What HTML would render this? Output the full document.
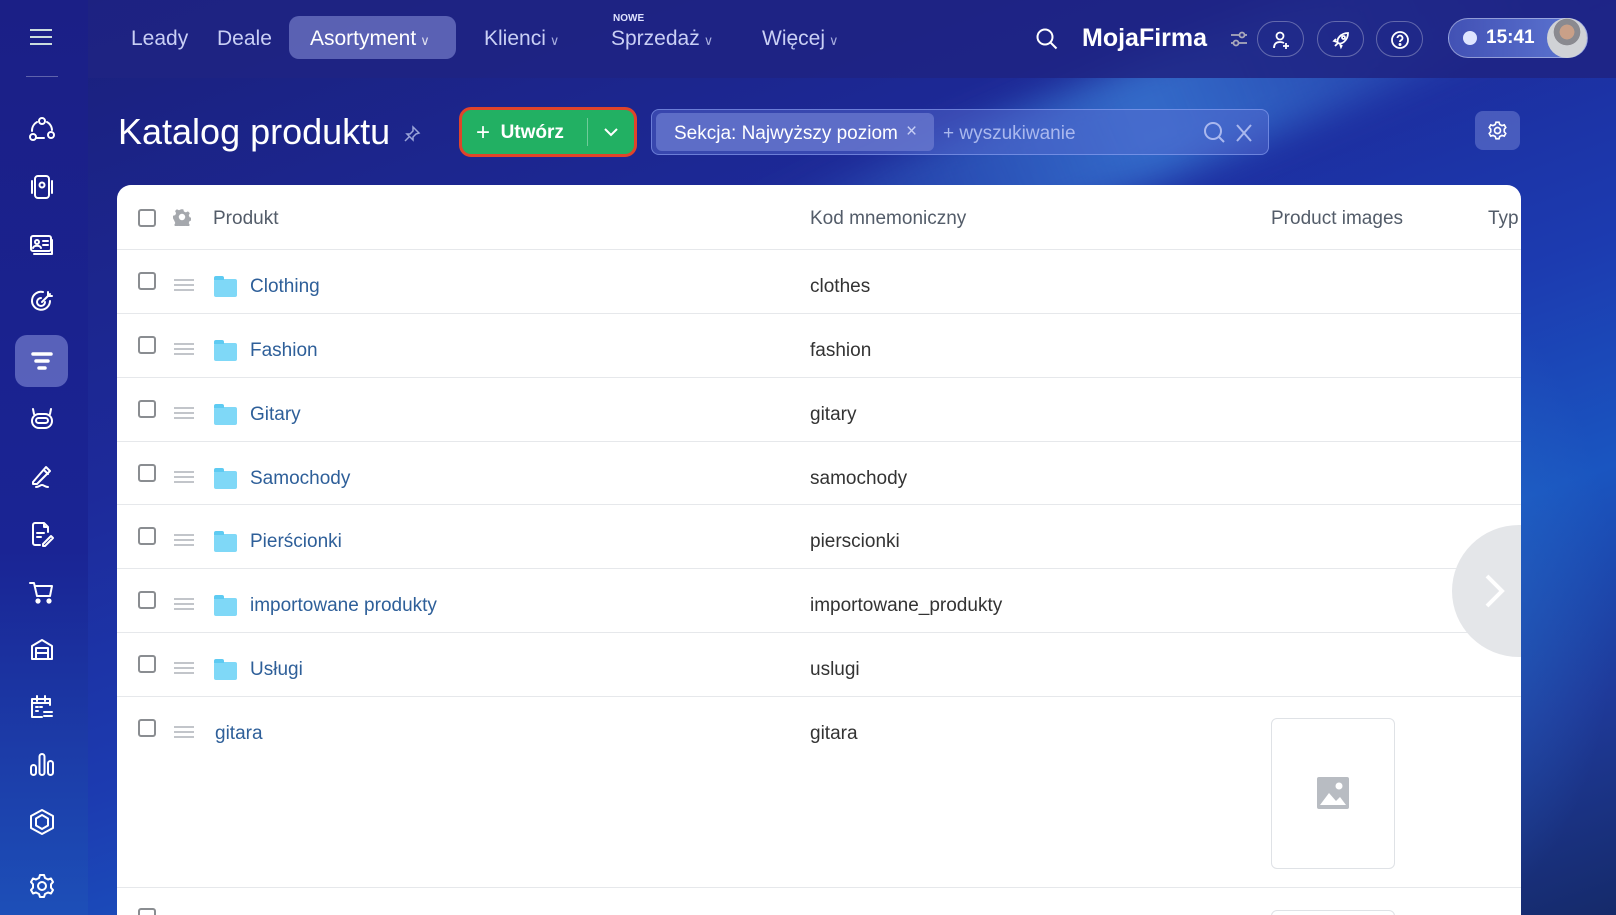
<!DOCTYPE html>
<html><head><meta charset="utf-8"><style>
*{margin:0;padding:0;box-sizing:border-box}
html{width:1616px;height:915px;overflow:hidden}
body{width:1616px;height:915px;overflow:hidden;font-family:"Liberation Sans",sans-serif;position:relative;
background:linear-gradient(160deg,#1a1f7a 0%,#1d2a9a 35%,#1c3bb0 55%,#1a55c0 70%,#1f3a9a 85%,#152a6a 100%);}
.streak{position:absolute;left:700px;top:60px;width:900px;height:120px;background:linear-gradient(90deg,rgba(60,140,230,0),rgba(70,160,240,.55),rgba(60,140,230,0));transform:rotate(-22deg);filter:blur(18px)}
.streak2{position:absolute;left:1300px;top:300px;width:316px;height:615px;background:radial-gradient(ellipse,rgba(40,110,200,.6),rgba(0,0,0,0) 70%)}
.side{position:absolute;left:0;top:0;width:88px;height:915px;background:linear-gradient(180deg,#1b1f86,#1a2494 60%,#1d4fb8)}
.top{position:absolute;left:88px;top:0;width:1528px;height:78px;background:rgba(30,35,130,.85)}
.nav{position:absolute;top:27px;font-size:21px;color:#dfe3ff;white-space:nowrap}
.chev{font-size:13px;opacity:.8;margin-left:4px}
.ic{position:absolute;left:28px;width:28px;height:28px}
.ic svg{width:28px;height:28px;stroke:#fff;fill:none;stroke-width:2;stroke-linecap:round;stroke-linejoin:round}
.cbtn{position:absolute;width:47px;height:36px;border:1px solid rgba(255,255,255,.3);border-radius:18px;top:21px}
.cbtn svg{position:absolute;left:13px;top:8px;width:20px;height:20px;stroke:#fff;fill:none;stroke-width:1.8}
.card{position:absolute;left:117px;top:185px;width:1404px;height:730px;background:#fff;border-radius:14px 14px 0 0;overflow:hidden}
.row{position:absolute;left:0;width:1404px;border-bottom:1px solid #e6e8eb}
.cb{position:absolute;left:21px;width:18px;height:18px;border:2px solid #8a8d91;border-radius:3px}
.row .cb{top:22px}
.drag{position:absolute;left:57px;top:29px;width:20px;height:12px;border-top:2px solid #c2c5ca;border-bottom:2px solid #c2c5ca}
.drag:after{content:"";position:absolute;left:0;top:3px;width:20px;height:2px;background:#c2c5ca}
.fold{position:absolute;left:97px;top:29px;width:23px;height:18px;background:#7fd8f7;border-radius:2px}
.fold:before{content:"";position:absolute;left:0;top:-3px;width:10px;height:4px;background:#5ecbf2;border-radius:2px 2px 0 0}
.nm{position:absolute;left:133px;top:26px;font-size:19px;color:#2e5f99}
.kd{position:absolute;left:693px;top:26px;font-size:19px;color:#333}
</style></head><body>
<div class="streak"></div><div class="streak2"></div>
<div class="side">
 <div style="position:absolute;left:30px;top:29px;width:22px;height:2px;background:#cdd;box-shadow:0 7px 0 #cdd,0 14px 0 #cdd"></div>
 <div style="position:absolute;left:26px;top:76px;width:32px;height:1px;background:rgba(255,255,255,.3)"></div>
 <div style="position:absolute;left:15px;top:335px;width:53px;height:52px;border-radius:12px;background:rgba(150,160,230,.5)"></div>
 <div class="ic" style="top:116px"><svg viewBox="0 0 28 28"><circle cx="14" cy="5" r="3"/><circle cx="5" cy="21" r="3"/><circle cx="23" cy="19" r="3"/><path d="M9 6 A10 10 0 0 0 4 15M19 6a10 10 0 0 1 5 8M8 22h8"/></svg></div>
 <div class="ic" style="top:173px"><svg viewBox="0 0 28 28"><rect x="7" y="3" width="14" height="22" rx="3"/><circle cx="14" cy="12" r="2.5"/><path d="M4 8v12M24 8v12"/></svg></div>
 <div class="ic" style="top:231px"><svg viewBox="0 0 28 28"><rect x="3" y="5" width="20" height="15" rx="2"/><circle cx="9" cy="11" r="2"/><path d="M5 17c1-3 7-3 8 0M15 10h5M15 14h5M6 23h18V9"/></svg></div>
 <div class="ic" style="top:288px"><svg viewBox="0 0 28 28"><path d="M22 13a9 9 0 1 1-7-9"/><path d="M17 14a4 4 0 1 1-4-4"/><path d="M14 14l8-8M20 4v4h4"/></svg></div>
 <div class="ic" style="top:347px"><svg viewBox="0 0 28 28" style="stroke-width:3.5"><path d="M5 7h18M8 14h12M11 21h6"/></svg></div>
 <div class="ic" style="top:405px"><svg viewBox="0 0 28 28"><rect x="4" y="9" width="20" height="14" rx="7"/><path d="M6 9L5 4M22 9l1-5"/><rect x="8" y="13" width="12" height="5" rx="2.5"/></svg></div>
 <div class="ic" style="top:462px"><svg viewBox="0 0 28 28"><path d="M5 20L18 5l4 4L9 22H5zM16 8l4 4M8 25c3 0 4-2 6-2s3 2 6 2"/></svg></div>
 <div class="ic" style="top:520px"><svg viewBox="0 0 28 28"><path d="M20 12V7l-4-4H7a2 2 0 0 0-2 2v18a2 2 0 0 0 2 2h5M16 3v4h4M9 13h7M9 17h4M15 24l8-8 2 2-8 8h-2z"/></svg></div>
 <div class="ic" style="top:578px"><svg viewBox="0 0 28 28"><path d="M2 5h4l3 13h13l2-10H8"/><circle cx="10" cy="23" r="1.6" fill="#fff"/><circle cx="21" cy="23" r="1.6" fill="#fff"/></svg></div>
 <div class="ic" style="top:635px"><svg viewBox="0 0 28 28"><path d="M4 24V11l10-6 10 6v13zM8 24V13h12v11M8 18h12"/></svg></div>
 <div class="ic" style="top:693px"><svg viewBox="0 0 28 28"><path d="M22 12V6H4v18h10M4 10h18M9 3v5M17 3v5M8 14h2M12 14h2M8 18h2M16 19h8M16 23h8"/></svg></div>
 <div class="ic" style="top:750px"><svg viewBox="0 0 28 28"><rect x="3" y="15" width="5" height="10" rx="2.5"/><rect x="11.5" y="4" width="5" height="21" rx="2.5"/><rect x="20" y="11" width="5" height="14" rx="2.5"/></svg></div>
 <div class="ic" style="top:808px"><svg viewBox="0 0 28 28"><path d="M14 2l11 6v12l-11 6-11-6V8z"/><path d="M14 7l6 3.5v7L14 21l-6-3.5v-7z"/></svg></div>
 <div class="ic" style="top:872px"><svg viewBox="0 0 28 28"><circle cx="14" cy="14" r="4"/><path d="M12 3h4l1 3 3 1.5 3-1 2 3.5-2 2.3v3.4l2 2.3-2 3.5-3-1-3 1.5-1 3h-4l-1-3-3-1.5-3 1-2-3.5 2-2.3v-3.4l-2-2.3 2-3.5 3 1 3-1.5z"/></svg></div>
</div>
<div class="top"></div>
<div class="nav" style="left:131px;color:#c9cff5">Leady</div>
<div class="nav" style="left:217px;color:#c9cff5">Deale</div>
<div style="position:absolute;left:289px;top:16px;width:167px;height:43px;border-radius:10px;background:rgba(140,150,220,.55)"></div>
<div class="nav" style="left:310px;color:#fff">Asortyment<span class="chev">∨</span></div>
<div class="nav" style="left:484px;color:#c9cff5">Klienci<span class="chev">∨</span></div>
<div style="position:absolute;left:613px;top:13px;font-size:10px;font-weight:bold;color:#dfe3ff">NOWE</div>
<div class="nav" style="left:611px;color:#c9cff5">Sprzedaż<span class="chev">∨</span></div>
<div class="nav" style="left:762px;color:#c9cff5">Więcej<span class="chev">∨</span></div>
<svg style="position:absolute;left:1035px;top:27px" width="24" height="24" viewBox="0 0 24 24" fill="none" stroke="#fff" stroke-width="2"><circle cx="10" cy="10" r="7.5"/><path d="M15.5 15.5l6 6"/></svg>
<div style="position:absolute;left:1082px;top:24px;font-size:25px;font-weight:bold;color:#fff">MojaFirma</div>
<svg style="position:absolute;left:1229px;top:30px" width="20" height="18" viewBox="0 0 20 18" fill="none" stroke="#aab" stroke-width="1.8"><path d="M2 5h16M2 13h16"/><circle cx="13" cy="5" r="2.5" fill="#2a2f8a"/><circle cx="7" cy="13" r="2.5" fill="#2a2f8a"/></svg>
<div class="cbtn" style="left:1257px"><svg viewBox="0 0 20 20"><circle cx="9" cy="6" r="3.5"/><path d="M3 18c0-5 3-6 6-6 2 0 3 .5 4 1M15 13v6M12 16h6"/></svg></div>
<div class="cbtn" style="left:1317px"><svg viewBox="0 0 20 20"><path d="M7 13C5 9 10 3 17 3c0 7-6 12-10 10zM7 13l-3 3M5 9l-2 2 3 1M11 15l-1 2-1-3"/><circle cx="12.5" cy="7.5" r="1.5"/></svg></div>
<div class="cbtn" style="left:1376px"><svg viewBox="0 0 20 20"><circle cx="10" cy="10" r="8"/><path d="M7.5 8a2.5 2.5 0 1 1 3.5 2.3c-.8.4-1 1-1 1.7"/><circle cx="10" cy="14.5" r=".6" fill="#fff"/></svg></div>
<div style="position:absolute;left:1448px;top:18px;width:140px;height:40px;border-radius:20px;border:1px solid rgba(255,255,255,.4);background:linear-gradient(90deg,rgba(90,110,210,.6),rgba(110,140,230,.8))"></div>
<div style="position:absolute;left:1463px;top:31px;width:14px;height:14px;border-radius:50%;background:#dfe6ff"></div>
<div style="position:absolute;left:1486px;top:27px;font-size:19px;font-weight:bold;color:#fff">15:41</div>
<div style="position:absolute;left:1547px;top:18px;width:40px;height:40px;border-radius:50%;background:radial-gradient(circle at 50% 35%,#c9a088 0 22%,#8a8a90 23% 40%,#d0d2d6 41%)"></div>

<div style="position:absolute;left:118px;top:111px;font-size:36px;color:#fff">Katalog produktu</div>
<svg style="position:absolute;left:403px;top:125px" width="18" height="18" viewBox="0 0 18 18" fill="none" stroke="#9aa4d8" stroke-width="1.5"><path d="M10 2l6 6-3 1-3 3 0 3-6-6 3 0 3-3zM6 12l-4 4"/></svg>
<div style="position:absolute;left:459px;top:107px;width:178px;height:50px;border-radius:12px;border:3px solid #e0442a;background:#22b063"></div>
<div style="position:absolute;left:476px;top:119px;font-size:19px;font-weight:bold;color:#fff"><span style="font-weight:normal;font-size:24px;vertical-align:-2px">+</span>&nbsp; Utwórz</div>
<div style="position:absolute;left:587px;top:118px;width:1px;height:28px;background:rgba(255,255,255,.35)"></div>
<svg style="position:absolute;left:603px;top:126px" width="16" height="12" viewBox="0 0 16 12" fill="none" stroke="#fff" stroke-width="2"><path d="M2 3l6 6 6-6"/></svg>
<div style="position:absolute;left:651px;top:109px;width:618px;height:46px;border-radius:8px;border:1px solid rgba(160,180,255,.5);background:rgba(90,110,210,.45)"></div>
<div style="position:absolute;left:656px;top:113px;width:278px;height:38px;border-radius:6px;background:rgba(110,125,210,.7)"></div>
<div style="position:absolute;left:674px;top:123px;font-size:19px;color:#fff">Sekcja: Najwyższy poziom</div>
<div style="position:absolute;left:906px;top:121px;font-size:19px;color:#c8cff5">×</div>
<div style="position:absolute;left:943px;top:123px;font-size:19px;color:#aab8ee">+ wyszukiwanie</div>
<svg style="position:absolute;left:1203px;top:121px" width="52" height="24" viewBox="0 0 52 24" fill="none" stroke="#aab8ee" stroke-width="2"><circle cx="10" cy="10" r="8"/><path d="M16 16l5 5M34 4l14 16M48 4L34 20"/></svg>
<div style="position:absolute;left:1475px;top:111px;width:45px;height:39px;border-radius:8px;background:rgba(110,125,210,.55)"></div>
<svg style="position:absolute;left:1487px;top:120px" width="21" height="21" viewBox="0 0 28 28" fill="none" stroke="#fff" stroke-width="2.2"><circle cx="14" cy="14" r="4"/><path d="M12 3h4l1 3 3 1.5 3-1 2 3.5-2 2.3v3.4l2 2.3-2 3.5-3-1-3 1.5-1 3h-4l-1-3-3-1.5-3 1-2-3.5 2-2.3v-3.4l-2-2.3 2-3.5 3 1 3-1.5z"/></svg>

<div class="card">
 <div style="position:absolute;left:0;top:0;width:1404px;height:65px;border-bottom:1px solid #e6e8eb">
  <div class="cb" style="top:24px"></div>
  <svg style="position:absolute;left:56px;top:23px" width="18" height="18" viewBox="0 0 28 28" fill="#a5a8ad"><path d="M12 2h4l1 3.5 3 1.3 3.3-1.6 2.8 2.8-1.6 3.3 1.3 3 3.5 1v4l-3.5 1-1.3 3 1.6 3.3-2.8 2.8-3.3-1.6-3 1.3-1 3.5h-4l-1-3.5-3-1.3-3.3 1.6-2.8-2.8 1.6-3.3-1.3-3L0 16v-4l3.5-1 1.3-3-1.6-3.3 2.8-2.8 3.3 1.6 3-1.3zM14 9a5 5 0 1 0 0 10 5 5 0 0 0 0-10z"/></svg>
  <div style="position:absolute;left:96px;top:23px;font-size:19px;color:#535c69">Produkt</div>
  <div style="position:absolute;left:693px;top:23px;font-size:19px;color:#535c69">Kod mnemoniczny</div>
  <div style="position:absolute;left:1154px;top:23px;font-size:19px;color:#535c69">Product images</div>
  <div style="position:absolute;left:1371px;top:23px;font-size:19px;color:#535c69">Typ</div>
 </div>
 <div class="row" style="top:65px;height:64px"><div class="cb"></div><div class="drag"></div><div class="fold"></div><div class="nm">Clothing</div><div class="kd">clothes</div></div>
 <div class="row" style="top:129px;height:64px"><div class="cb"></div><div class="drag"></div><div class="fold"></div><div class="nm">Fashion</div><div class="kd">fashion</div></div>
 <div class="row" style="top:193px;height:64px"><div class="cb"></div><div class="drag"></div><div class="fold"></div><div class="nm">Gitary</div><div class="kd">gitary</div></div>
 <div class="row" style="top:257px;height:63px"><div class="cb"></div><div class="drag"></div><div class="fold"></div><div class="nm">Samochody</div><div class="kd">samochody</div></div>
 <div class="row" style="top:320px;height:64px"><div class="cb"></div><div class="drag"></div><div class="fold"></div><div class="nm">Pierścionki</div><div class="kd">pierscionki</div></div>
 <div class="row" style="top:384px;height:64px"><div class="cb"></div><div class="drag"></div><div class="fold"></div><div class="nm">importowane produkty</div><div class="kd">importowane_produkty</div></div>
 <div class="row" style="top:448px;height:64px"><div class="cb"></div><div class="drag"></div><div class="fold"></div><div class="nm">Usługi</div><div class="kd">uslugi</div></div>
 <div class="row" style="top:512px;height:191px"><div class="cb"></div><div class="drag"></div><div class="nm" style="left:98px">gitara</div><div class="kd">gitara</div>
  <div style="position:absolute;left:1154px;top:21px;width:124px;height:151px;border:1px solid #dfe2e6;border-radius:6px"></div>
  <svg style="position:absolute;left:1200px;top:80px" width="32" height="32" viewBox="0 0 32 32"><rect width="32" height="32" rx="2" fill="#b8bcc2"/><circle cx="22" cy="9" r="3.5" fill="#fff"/><path d="M3 28l9-12 7 8 4-4 6 8z" fill="#fff"/></svg>
 </div>
 <div class="cb" style="top:723px"></div>
 <div style="position:absolute;left:1154px;top:725px;width:124px;height:40px;border:1px solid #dfe2e6;border-radius:6px"></div>
 <div style="position:absolute;left:1335px;top:340px;width:134px;height:132px;border-radius:50%;background:#e4e6e9"></div>
 <svg style="position:absolute;left:1365px;top:388px" width="26" height="36" viewBox="0 0 26 36" fill="none" stroke="#fff" stroke-width="4"><path d="M5 3l15 15L5 33"/></svg>
</div>
</body></html>
